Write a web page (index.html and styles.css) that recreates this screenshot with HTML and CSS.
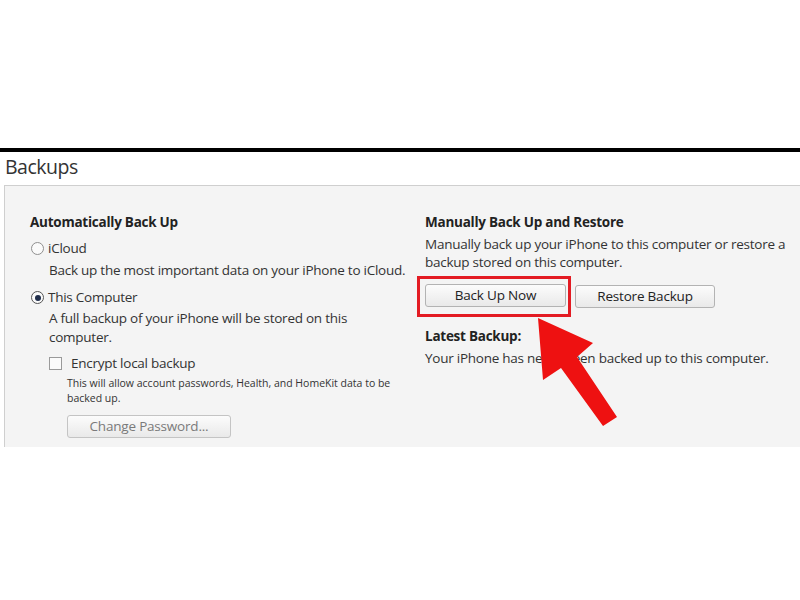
FILE: index.html
```html
<!DOCTYPE html>
<html>
<head>
<meta charset="utf-8">
<link rel="stylesheet" href="styles.css">
</head>
<body>
<div class="page">
  <div class="rule"></div>
  <div class="title">Backups</div>
  <div class="panel">
    <div class="col left">
      <div class="heading">Automatically Back Up</div>
      <div class="option opt-icloud">
        <span class="radio"></span><span>iCloud</span>
      </div>
      <div class="desc desc-icloud">Back up the most important data on your iPhone to iCloud.</div>
      <div class="option opt-computer">
        <span class="radio checked"></span><span>This Computer</span>
      </div>
      <div class="desc desc-computer">A full backup of your iPhone will be stored on this computer.</div>
      <div class="check-row">
        <span class="checkbox"></span><span>Encrypt local backup</span>
      </div>
      <div class="small">This will allow account passwords, Health, and HomeKit data to be backed up.</div>
      <div class="btn disabled change-btn">Change Password...</div>
    </div>
    <div class="col right">
      <div class="heading">Manually Back Up and Restore</div>
      <div class="desc manual-desc">Manually back up your iPhone to this computer or restore a backup stored on this computer.</div>
      <div class="btn-row">
        <div class="highlight"><div class="btn">Back Up Now</div></div>
        <div class="btn">Restore Backup</div>
      </div>
      <div class="heading latest">Latest Backup:</div>
      <div class="desc latest-desc">Your iPhone has never been backed up to this computer.</div>
    </div>
  </div>
  <svg class="arrow" width="800" height="600" viewBox="0 0 800 600">
    <polygon points="538,318 593,343 577,357 617,417 603,426 561,368 543,380" fill="#ee1111"/>
  </svg>
</div>
</body>
</html>
```

FILE: styles.css
```css
html, body {
  margin: 0;
  padding: 0;
  background: #ffffff;
}
.page {
  position: relative;
  width: 800px;
  height: 600px;
  overflow: hidden;
  font-family: "Open Sans", "Noto Sans", sans-serif;
  color: #333333;
  padding-top: 148px;
  box-sizing: border-box;
}
.rule {
  height: 4px;
  background: #000000;
}
.title {
  height: 33px;
  box-sizing: border-box;
  padding-left: 5px;
  padding-top: 2px;
  font-size: 19.5px;
  line-height: 26px;
  color: #333333;
  letter-spacing: -0.5px;
}
.panel {
  margin-left: 4px;
  border-top: 1px solid #cfcfcf;
  border-left: 1px solid #cfcfcf;
  background: #f4f4f4;
  height: 262px;
  box-sizing: border-box;
  display: flex;
  padding-left: 25px;
  padding-top: 26px;
}
.col.left {
  width: 395px;
  display: flex;
  flex-direction: column;
}
.col.right {
  flex: 1;
  display: flex;
  flex-direction: column;
}
.heading {
  font-weight: 700;
  font-size: 13.5px;
  line-height: 20px;
  color: #222222;
  letter-spacing: -0.25px;
}
.option, .desc, .check-row {
  font-size: 13.5px;
  line-height: 19px;
  letter-spacing: -0.25px;
}
.option {
  display: flex;
  align-items: center;
  margin-left: 1px;
}
.opt-icloud { margin-top: 7px; }
.opt-computer { margin-top: 8px; }
.radio {
  width: 11px;
  height: 11px;
  border: 1px solid #8f8f8f;
  border-radius: 50%;
  background: #fafafa;
  margin-right: 4px;
  position: relative;
  box-sizing: content-box;
}
.radio.checked {
  border-color: #555;
}
.radio.checked::after {
  content: "";
  position: absolute;
  left: 2.5px;
  top: 2.5px;
  width: 6px;
  height: 6px;
  border-radius: 50%;
  background: #1f2d4a;
}
.desc {
  padding-left: 19px;
  color: #333333;
}
.desc-icloud { margin-top: 3px; }
.desc-computer { margin-top: 2px; width: 330px; }
.check-row {
  display: flex;
  align-items: center;
  margin-top: 7px;
  padding-left: 19px;
}
.checkbox {
  width: 11px;
  height: 11px;
  border: 1px solid #9a9a9a;
  background: #fbfbfb;
  margin-right: 9px;
}
.small {
  font-size: 10.5px;
  line-height: 15px;
  padding-left: 37px;
  margin-top: 3px;
  width: 330px;
  color: #333;
}
.btn {
  height: 23px;
  box-sizing: border-box;
  border: 1px solid #b3b3b3;
  border-radius: 3px;
  background: linear-gradient(#fcfcfc, #e9e9e9);
  font-size: 13.5px;
  line-height: 21px;
  text-align: center;
  color: #222;
  letter-spacing: -0.2px;
}
.btn.disabled {
  color: #7a7a7a;
  border-color: #c4c4c4;
}
.change-btn {
  width: 164px;
  margin-left: 37px;
  margin-top: 9px;
}
.manual-desc {
  padding-left: 0;
  margin-top: 3px;
  line-height: 18px;
  width: 370px;
}
.btn-row {
  display: flex;
  align-items: center;
  margin-top: 5px;
}
.highlight {
  border: 3px solid #e31b23;
  padding: 5px 2px 7px 5px;
  margin-left: -8px;
}
.highlight .btn {
  width: 141px;
}
.btn-row > .btn {
  width: 140px;
  margin-left: 4px;
}
.latest {
  margin-top: 9px;
}
.latest-desc {
  padding-left: 0;
  margin-top: 3px;
}
.arrow {
  position: absolute;
  left: 0;
  top: 0;
}
```
